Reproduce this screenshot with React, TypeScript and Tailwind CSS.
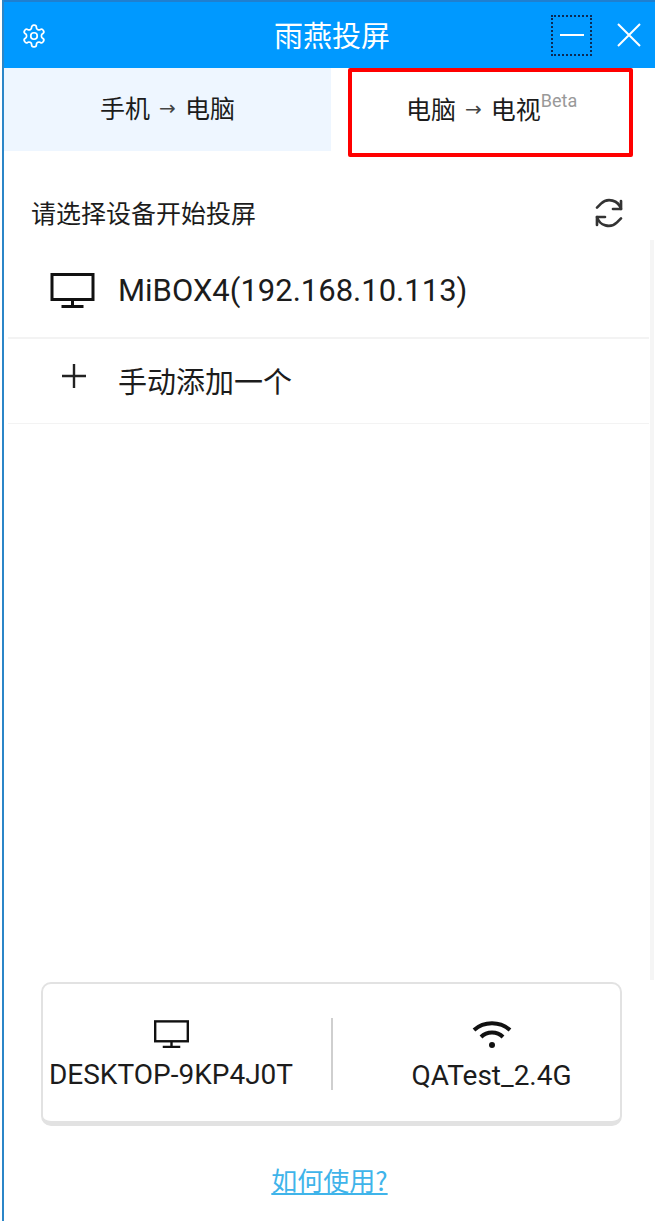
import React from "react";

const Monitor = ({ w, h, sw }: { w: number; h: number; sw: number }) => (
  <svg width={w} height={h} viewBox="0 0 44 36" fill="none" stroke="#111" strokeWidth={sw}>
    <rect x="1.5" y="1.5" width="41" height="25" />
    <path d="M22 27v6M11 33.5h22" />
  </svg>
);

const latin = { fontFamily: 'Roboto, "Liberation Sans", sans-serif' };
const arrow = { fontFamily: '"DejaVu Sans", sans-serif' };

export default function App() {
  return (
    <div className="w-[655px] h-[1221px] pl-[2px] bg-white overflow-hidden relative">
      <div
        className="h-full flex flex-col bg-white border-l-2 border-[#2b86c8] text-[#1c1c1c]"
        style={{ fontFamily: '"Noto Sans CJK SC", "Liberation Sans", sans-serif' }}
      >
        <header className="h-[68px] shrink-0 flex items-center bg-[#0099ff] border-t-2 border-[#1f7fd0] relative">
          <svg className="ml-[17px] mt-[1px]" width="26" height="26" viewBox="0 0 24 24" fill="none" stroke="#fff" strokeWidth="1.6" strokeLinecap="round" strokeLinejoin="round">
            <path d="M12.22 2h-.44a2 2 0 0 0-2 2v.18a2 2 0 0 1-1 1.73l-.43.25a2 2 0 0 1-2 0l-.15-.08a2 2 0 0 0-2.73.73l-.22.38a2 2 0 0 0 .73 2.73l.15.1a2 2 0 0 1 1 1.72v.51a2 2 0 0 1-1 1.74l-.15.09a2 2 0 0 0-.73 2.73l.22.38a2 2 0 0 0 2.73.73l.15-.08a2 2 0 0 1 2 0l.43.25a2 2 0 0 1 1 1.73V20a2 2 0 0 0 2 2h.44a2 2 0 0 0 2-2v-.18a2 2 0 0 1 1-1.73l.43-.25a2 2 0 0 1 2 0l.15.08a2 2 0 0 0 2.73-.73l.22-.39a2 2 0 0 0-.73-2.73l-.15-.08a2 2 0 0 1-1-1.74v-.5a2 2 0 0 1 1-1.74l.15-.09a2 2 0 0 0 .73-2.73l-.22-.38a2 2 0 0 0-2.73-.73l-.15.08a2 2 0 0 1-2 0l-.43-.25a2 2 0 0 1-1-1.73V4a2 2 0 0 0-2-2z" />
            <circle cx="12" cy="12" r="3" />
          </svg>
          <div className="absolute left-[270px] top-[12px] text-[29px] leading-[40px] text-white">雨燕投屏</div>
          <div className="ml-auto mr-[14px] flex items-center gap-[25px]">
            <div className="w-[41px] h-[41px] border-2 border-dotted border-[#0a2a55] flex items-center justify-center">
              <div className="w-[24px] h-[2px] bg-white" />
            </div>
            <svg width="24" height="24" viewBox="0 0 24 24" stroke="#fff" strokeWidth="2" fill="none">
              <path d="M1 1l22 22M23 1L1 23" />
            </svg>
          </div>
        </header>

        <div className="flex h-[89px] shrink-0 items-start">
          <div className="w-[327px] h-[83px] bg-[#eef6ff] flex items-center justify-center text-[25px] gap-[9px] pb-[4px]">
            <span>手机</span>
            <span className="text-[20px] text-[#444]" style={arrow}>→</span>
            <span>电脑</span>
          </div>
          <div className="ml-[17px] w-[285px] h-[89px] border-4 border-[#ff0000] rounded-[2px] flex items-center gap-[9px] text-[25px] pb-[8px] pl-[54px]">
            <span>电脑</span>
            <span className="text-[20px] text-[#444]" style={arrow}>→</span>
            <span className="flex items-start">
              电视
              <span className="mt-[-4px] text-[18px] leading-[30px] text-[#999]" style={latin}>Beta</span>
            </span>
          </div>
        </div>

        <div className="flex items-center justify-between h-[84px] shrink-0 pl-[27px] pr-[30px] pt-[28px] text-[25px]">
          <span>请选择设备开始投屏</span>
          <svg width="32" height="32" viewBox="0 0 24 24" fill="none" stroke="#333" strokeWidth="2" strokeLinecap="round" strokeLinejoin="round">
            <path d="M21 9a9 9 0 0 0-15-4L3 8" />
            <path d="M21 3v6h-6" />
            <path d="M3 15a9 9 0 0 0 15 4l3-3" />
            <path d="M3 21v-6h6" />
          </svg>
        </div>

        <div className="ml-[4px] mr-[6px] h-[98px] shrink-0 flex items-center pl-[42px] pt-[4px] border-b-2 border-[#f3f3f3] text-[31px]" style={latin}>
          <Monitor w={45} h={36} sw={3} />
          <span className="ml-[23px]">MiBOX4(192.168.10.113)</span>
        </div>
        <div className="ml-[4px] mr-[6px] h-[85px] shrink-0 flex items-center pl-[53px] border-b border-[#f3f3f3] text-[29px]">
          <svg className="mb-[10px]" width="26" height="26" viewBox="0 0 26 26" stroke="#222" strokeWidth="2.4"><path d="M13 1v24M1 13h24" /></svg>
          <span className="ml-[31px]">手动添加一个</span>
        </div>

        <div className="flex-1" />

        <div className="ml-[37px] w-[581px] h-[144px] shrink-0 flex items-center rounded-[10px] border-2 border-b-[5px] border-[#e2e2e2] text-[28px] bg-white" style={latin}>
          <div className="w-[288px] pr-[32px] flex flex-col items-center pt-[8px]">
            <Monitor w={35} h={29} sw={3} />
            <span className="mt-[8px] leading-[36px] whitespace-nowrap">DESKTOP-9KP4J0T</span>
          </div>
          <div className="w-[2px] h-[72px] bg-[#cfcfcf] mt-[2px]" />
          <div className="flex-1 flex flex-col items-center pl-[30px] pt-[8px]">
            <svg width="40" height="30" viewBox="0 0 40 30" fill="none" stroke="#111" strokeWidth="4">
              <path d="M2 10c10-9 26-9 36 0" />
              <path d="M9 17c6-6 16-6 22 0" />
              <circle cx="20" cy="25" r="3" fill="#111" stroke="none" />
            </svg>
            <span className="mt-[8px] leading-[36px] whitespace-nowrap">QATest_2.4G</span>
          </div>
        </div>

        <div className="h-[95px] shrink-0 flex items-start justify-center pt-[36px] text-[26px] leading-[36px]">
          <a className="text-[#3fb4ea] underline">如何使用?</a>
        </div>
      </div>

      <div className="absolute right-[1px] top-[240px] h-[740px] w-[4px] bg-[#f5f5f5]" />
    </div>
  );
}
